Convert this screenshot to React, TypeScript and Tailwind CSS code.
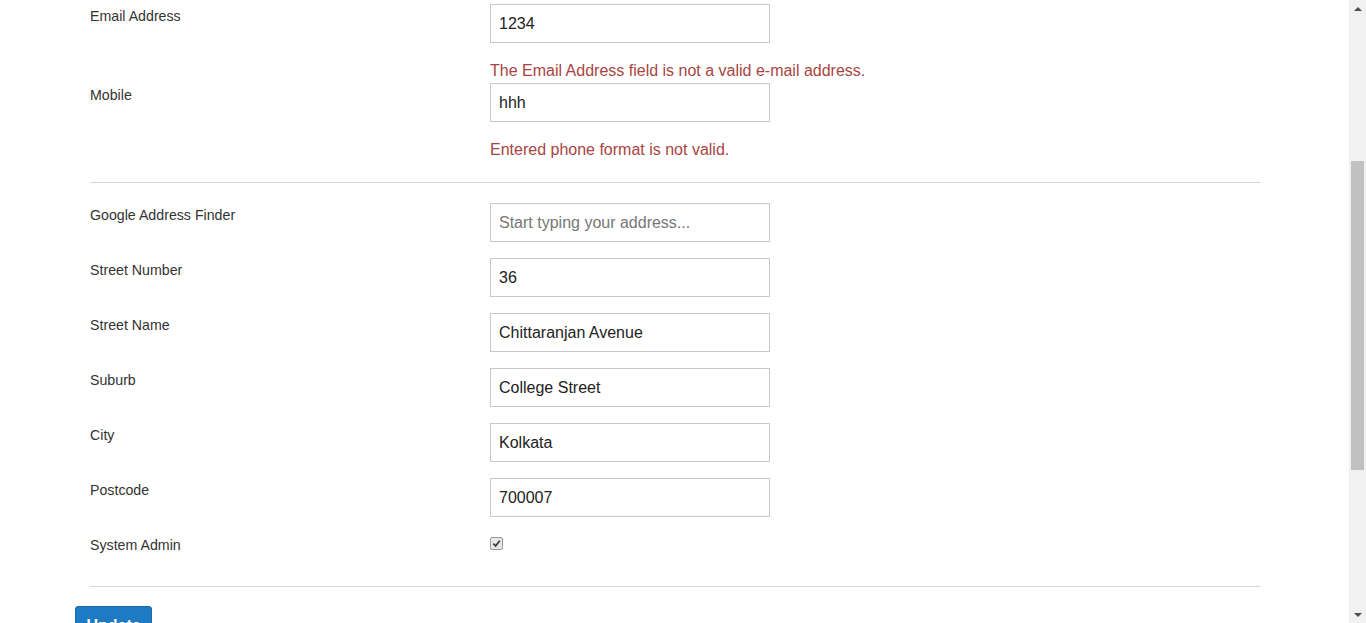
import React from 'react';

type Field = { label: string; value?: string; placeholder?: string; error?: string };

const topFields: Field[] = [
  { label: 'Email Address', value: '1234', error: 'The Email Address field is not a valid e-mail address.' },
  { label: 'Mobile', value: 'hhh', error: 'Entered phone format is not valid.' },
];

const addressFields: Field[] = [
  { label: 'Google Address Finder', placeholder: 'Start typing your address...' },
  { label: 'Street Number', value: '36' },
  { label: 'Street Name', value: 'Chittaranjan Avenue' },
  { label: 'Suburb', value: 'College Street' },
  { label: 'City', value: 'Kolkata' },
  { label: 'Postcode', value: '700007' },
];

const FormRow: React.FC<{ field: Field; className?: string }> = ({ field, className }) => (
  <div className={`flex ${className ?? ''}`}>
    <label className="w-[400px] shrink-0 pt-[2px] text-[14.2px] leading-[20px] text-[#333]">{field.label}</label>
    <div className="flex flex-col">
      <input
        type="text"
        defaultValue={field.value}
        placeholder={field.placeholder}
        className="h-[39px] w-[280px] border border-[#c8c8c8] bg-white px-[8px] text-[16px] text-[#222] outline-none placeholder:text-[#777]"
      />
      {field.error && (
        <span className="mt-[17px] whitespace-nowrap text-[16px] leading-[22px] text-[#a94442]">{field.error}</span>
      )}
    </div>
  </div>
);

export default function App() {
  return (
    <div className="flex h-[623px] w-[1366px] overflow-hidden bg-white font-['Liberation_Sans',Arial,sans-serif]">
      <main className="flex-1 pl-[75px] pt-[4px]">
        <div className="pl-[15px]">
          <FormRow field={topFields[0]} />
          <FormRow field={topFields[1]} className="mt-[1px]" />
        </div>

        <hr className="ml-[15px] mt-[21px] w-[1170px] border-0 border-t border-[#d4d4d4]" />

        <div className="flex flex-col gap-[16px] pl-[15px] pt-[20px]">
          {addressFields.map((f) => (
            <FormRow key={f.label} field={f} />
          ))}
        </div>

        <div className="flex pl-[15px] pt-[16px]">
          <label className="w-[400px] shrink-0 pt-[2px] text-[14.2px] leading-[20px] text-[#333]">System Admin</label>
          <span className="mt-[4px] flex h-[13px] w-[13px] items-center justify-center rounded-[2px] border border-[#9a9a9a] bg-[#e6e6e6]">
            <svg viewBox="0 0 10 10" className="h-[9px] w-[9px]">
              <path d="M1.5 5.2 L4 7.8 L8.6 2" fill="none" stroke="#333" strokeWidth="1.8" />
            </svg>
          </span>
        </div>

        <hr className="ml-[15px] mt-[31px] w-[1170px] border-0 border-t border-[#d4d4d4]" />

        <button className="mt-[19px] h-[40px] w-[77px] rounded-[3px] border border-[#1a69a8] bg-[#1f7ac4] text-[16px] font-bold text-white">
          Update
        </button>
      </main>

      <div className="flex h-full w-[17px] shrink-0 flex-col items-center bg-[#f1f1f1]">
        <div className="flex h-[17px] items-center justify-center">
          <svg viewBox="0 0 8 4" className="h-[4px] w-[8px]">
            <path d="M0 4 L4 0 L8 4 Z" fill="#505050" />
          </svg>
        </div>
        <div className="mt-[144px] h-[309px] w-[13px] bg-[#c1c1c1]" />
        <div className="flex-1" />
        <div className="flex h-[17px] items-center justify-center">
          <svg viewBox="0 0 8 4" className="h-[4px] w-[8px]">
            <path d="M0 0 L4 4 L8 0 Z" fill="#505050" />
          </svg>
        </div>
      </div>
    </div>
  );
}
